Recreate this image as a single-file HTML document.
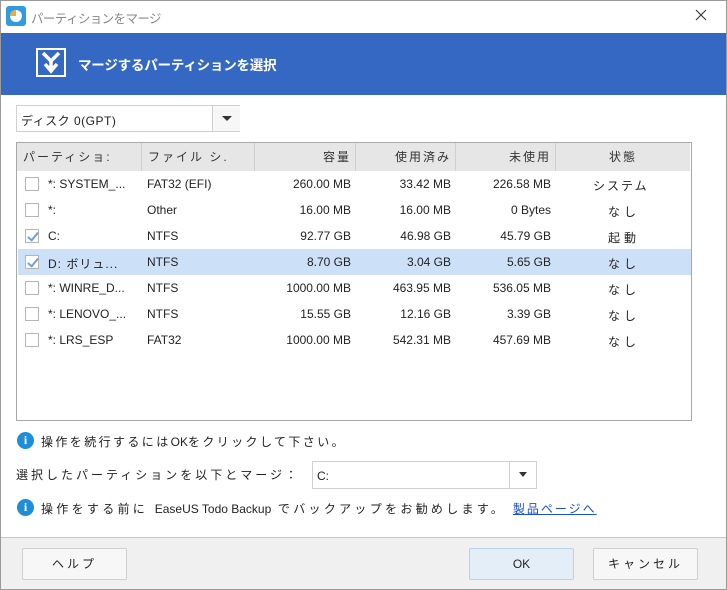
<!DOCTYPE html>
<html><head><meta charset="utf-8"><style>
*{margin:0;padding:0;box-sizing:border-box}
body{width:727px;height:590px;position:relative;background:#fff;font-family:"Liberation Sans","Noto Sans CJK JP",sans-serif;font-size:12px;color:#222;overflow:hidden}
.abs{position:absolute}
.win{left:0;top:0;width:727px;height:590px;border:1px solid #9a9a9a}
.hdr{left:1px;top:33px;width:725px;height:62px;background:#3568c2}
.cb{position:absolute;left:7px;top:6px;width:14px;height:14px;border:1px solid #b5b5b5;background:#fff}
.cb.on::after{content:"";position:absolute;left:4px;top:0px;width:4px;height:9px;border:solid #6fa0d8;border-width:0 2px 2px 0;transform:rotate(40deg)}
.row{position:absolute;left:1px;width:673px;height:26px}
.row span{position:absolute;top:6px;white-space:nowrap}
.th{position:absolute;top:0;height:28px;border-right:1px solid #cfcfcf;line-height:28px;color:#333;letter-spacing:2px}
.btn{position:absolute;top:548px;width:105px;height:32px;border:1px solid #cfcfcf;background:#f7f7f7;text-align:center;line-height:30px;border-radius:2px;letter-spacing:3px}
.info{width:17px;height:17px;border-radius:50%;background:#1e8fd6;color:#fff;font-weight:bold;font-size:12px;text-align:center;line-height:17px;font-family:"Liberation Serif",serif}
</style></head><body>
<div class="abs win"></div>
<div class="abs" style="left:6px;top:6px;width:20px;height:20px;background:#2f9be0;border-radius:3px"><div style="position:absolute;left:4px;top:4px;width:12px;height:12px;border-radius:50%;background:#fff"></div><div style="position:absolute;left:4px;top:4px;width:6px;height:6px;background:#f2a93b;border-radius:6px 0 0 0"></div></div>
<div class="abs" style="left:31px;top:8px;font-size:12.5px;letter-spacing:-0.6px;color:#888">パーティションをマージ</div>
<svg class="abs" style="left:695px;top:9px" width="12" height="12"><path d="M1 1 L11 11 M11 1 L1 11" stroke="#333" stroke-width="1.1"/></svg>
<div class="abs hdr"></div>
<div class="abs" style="left:36px;top:48px;width:30px;height:29px;border:2px solid #fff"><svg width="26" height="25" viewBox="0 0 26 25"><path d="M5 3 L13 11 L21 3" stroke="#fff" stroke-width="3.5" fill="none"/><path d="M13 10 V18 M7 14 L13 21 L19 14" stroke="#fff" stroke-width="3.5" fill="none"/></svg></div>
<div class="abs" style="left:78px;top:54px;font-size:13.5px;font-weight:bold;color:#fff;letter-spacing:-0.2px">マージするパーティションを選択</div>
<div class="abs" style="left:16px;top:105px;width:224px;height:27px;border:1px solid #d0d0d0"><span style="position:absolute;left:4px;top:6px;font-size:12px;letter-spacing:0.5px">ディスク 0(GPT)</span><div style="position:absolute;left:195px;top:0;width:28px;height:25px;border-left:1px solid #d0d0d0;background:#f7f7f7"><div style="position:absolute;left:9px;top:10px;border:5px solid transparent;border-top:5px solid #333;border-bottom:0"></div></div></div>
<div class="abs" style="left:16px;top:142px;width:676px;height:279px;border:1px solid #a8a8a8">
<div style="position:absolute;left:0;top:0;width:673px;height:28px;background:#e6e6e6"></div>
<div class="th" style="left:0;width:125px;padding-left:6px">パーティショ:</div>
<div class="th" style="left:125px;width:113px;padding-left:6px">ファイル シ.</div>
<div class="th" style="left:238px;width:101px;text-align:right;padding-right:4px">容量</div>
<div class="th" style="left:339px;width:100px;text-align:right;padding-right:4px">使用済み</div>
<div class="th" style="left:439px;width:100px;text-align:right;padding-right:4px">未使用</div>
<div class="th" style="left:539px;width:134px;text-align:center;border:0">状態</div>
<div class="row" style="top:28px"><div class="cb"></div><span style="left:30px">*: SYSTEM_...</span><span style="left:129px">FAT32 (EFI)</span><span style="right:340px">260.00 MB</span><span style="right:240px">33.42 MB</span><span style="right:140px">226.58 MB</span><span style="left:575px;letter-spacing:2px">システム</span></div>
<div class="row" style="top:54px"><div class="cb"></div><span style="left:30px">*:</span><span style="left:129px">Other</span><span style="right:340px">16.00 MB</span><span style="right:240px">16.00 MB</span><span style="right:140px">0 Bytes</span><span style="left:590px;letter-spacing:4px">なし</span></div>
<div class="row" style="top:80px"><div class="cb on"></div><span style="left:30px">C:</span><span style="left:129px">NTFS</span><span style="right:340px">92.77 GB</span><span style="right:240px">46.98 GB</span><span style="right:140px">45.79 GB</span><span style="left:590px;letter-spacing:4px">起動</span></div>
<div class="row" style="top:106px;background:#cce1f8"><div class="cb on"></div><span style="left:30px;letter-spacing:1px">D: ボリュ...</span><span style="left:129px">NTFS</span><span style="right:340px">8.70 GB</span><span style="right:240px">3.04 GB</span><span style="right:140px">5.65 GB</span><span style="left:590px;letter-spacing:4px">なし</span></div>
<div class="row" style="top:132px"><div class="cb"></div><span style="left:30px">*: WINRE_D...</span><span style="left:129px">NTFS</span><span style="right:340px">1000.00 MB</span><span style="right:240px">463.95 MB</span><span style="right:140px">536.05 MB</span><span style="left:590px;letter-spacing:4px">なし</span></div>
<div class="row" style="top:158px"><div class="cb"></div><span style="left:30px">*: LENOVO_...</span><span style="left:129px">NTFS</span><span style="right:340px">15.55 GB</span><span style="right:240px">12.16 GB</span><span style="right:140px">3.39 GB</span><span style="left:590px;letter-spacing:4px">なし</span></div>
<div class="row" style="top:184px"><div class="cb"></div><span style="left:30px">*: LRS_ESP</span><span style="left:129px">FAT32</span><span style="right:340px">1000.00 MB</span><span style="right:240px">542.31 MB</span><span style="right:140px">457.69 MB</span><span style="left:590px;letter-spacing:4px">なし</span></div>
</div>
<div class="abs info" style="left:17px;top:432px">i</div>
<div class="abs" style="left:41px;top:433px;letter-spacing:2.4px">操作を続行するには<span style="letter-spacing:0">OK</span>をクリックして下さい。</div>
<div class="abs" style="left:16px;top:466px;letter-spacing:3px">選択したパーティションを以下とマージ：</div>
<div class="abs" style="left:312px;top:461px;width:225px;height:28px;border:1px solid #d0d0d0"><span style="position:absolute;left:4px;top:7px">C:</span><div style="position:absolute;left:196px;top:0;width:27px;height:26px;border-left:1px solid #d0d0d0"><div style="position:absolute;left:9px;top:10px;border:4px solid transparent;border-top:5px solid #333;border-bottom:0"></div></div></div>
<div class="abs info" style="left:17px;top:499px">i</div>
<div class="abs" style="left:41px;top:500px;letter-spacing:3.3px">操作をする前に <span style="letter-spacing:0">EaseUS Todo Backup</span> でバックアップをお勧めします。 <span style="color:#1a4fd0;text-decoration:underline;letter-spacing:2px">製品ページへ</span></div>
<div class="abs" style="left:1px;top:537px;width:725px;height:52px;background:#f0f0f0;border-top:1px solid #c8c8c8"></div>
<div class="btn" style="left:22px">ヘルプ</div>
<div class="btn" style="left:469px;background:#e3eef9;border-color:#b9d1ea;letter-spacing:0">OK</div>
<div class="btn" style="left:593px">キャンセル</div>
</body></html>
